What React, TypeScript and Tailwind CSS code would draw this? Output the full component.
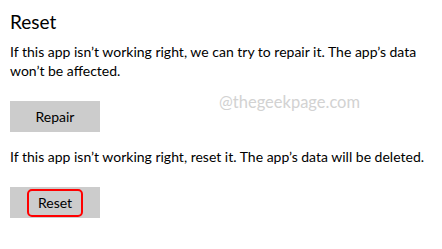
import React from 'react';

export default function App() {
  return (
    <div
      className="relative w-[442px] h-[249px] bg-white pl-[10px] pt-[9px] text-black"
      style={{ fontFamily: '"Segoe UI", Lato, sans-serif' }}
    >
      <h2 className="text-[19px] leading-[26px] font-normal">Reset</h2>

      <p className="mt-[7px] w-[425px] text-[14px] leading-[19px]">
        If this app isn’t working right, we can try to repair it. The app’s data won’t be affected.
      </p>

      <button className="mt-[21px] flex h-[31px] w-[90px] items-center justify-center bg-[#cccccc] text-[14px]">
        Repair
      </button>

      <p className="mt-[15px] w-[425px] text-[14px] leading-[19px]">
        If this app isn’t working right, reset it. The app’s data will be deleted.
      </p>

      <button className="mt-[21px] flex h-[31px] w-[90px] items-center justify-center bg-[#cccccc] text-[14px]">
        <span className="flex h-[28px] w-[56px] items-center justify-center rounded-[5px] border-2 border-[#ff0000]">
          Reset
        </span>
      </button>

      <span className="pointer-events-none absolute left-[219px] top-[94px] text-[16.5px] leading-[17px] text-[#d2d2d2]">
        @thegeekpage.com
      </span>
    </div>
  );
}
